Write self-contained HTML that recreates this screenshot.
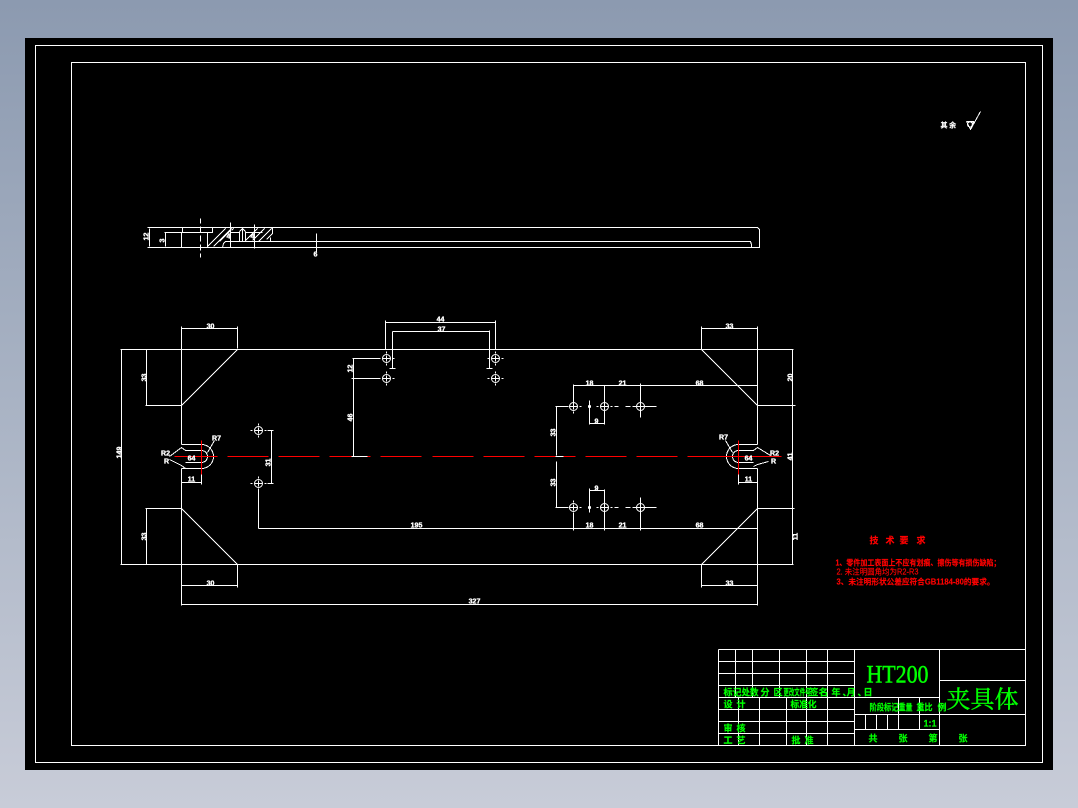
<!DOCTYPE html>
<html><head><meta charset="utf-8"><style>
html,body{margin:0;padding:0;width:1078px;height:808px;overflow:hidden;background:linear-gradient(180deg,#8c9ab0 0%,#a9b3c4 50%,#c8ccd8 100%)}
svg{position:absolute;left:0;top:0}
.w{fill:none;stroke:#fff;stroke-width:1}
.r{fill:none;stroke:#f00;stroke-width:1}
.t{font:bold 7px "Liberation Sans",sans-serif;fill:#fff;stroke:#fff;stroke-width:.35;text-anchor:middle}
.g{font:bold 9px "Liberation Sans","Noto Sans CJK SC",sans-serif;fill:#0f0;stroke:#0f0;stroke-width:.2}
.p{font:bold 8px "Liberation Sans","Noto Sans CJK SC",sans-serif;fill:#f00;stroke:#f00;stroke-width:.15}
</style></head><body>
<svg width="1078" height="808" viewBox="0 0 1078 808" shape-rendering="crispEdges">
<rect x="25" y="38" width="1028" height="732" fill="#000"/>
<g transform="translate(.5 .5)">
<defs><g id="h"><circle r="4" class="w" shape-rendering="auto"/><path class="w" d="M-8 0H-6M-4 0H4M6 0H8M0-7V-5M0-3V3M0 5V7"/></g></defs>
<path class="w" d="M35 45H1042V762H35ZM71 62H1025V745H71Z"/>

<!-- top view -->
<path class="w" d="M147 227H757L759 229V247H147M164 232H212V227M182 232V227M165 232V246M149 228V246M181 232V247M207 232V247M230 241H750L751 244V247M272 227V233M270 237V241M316 233V252M230 222V247M254 224V248M230 232H239M245 232H262M239 231V241M242 229V241M245 231V241M239 231L242 228L245 231M222 247L223 243L225 241H230"/>
<path class="w" d="M200 218V223M200 226V232M200 235V241M200 244V250M200 253V257"/>
<path class="w" d="M207 246L225 228M213 246L231 228M219 241L230 230M231 230L233 228M245 240L257 228M252 240L264 228M258 241L271 228M266 239L272 233"/>
<text class="t" transform="translate(148 236) rotate(-90)">12</text>
<text class="t" transform="translate(164 240) rotate(-90)">3</text>
<text class="t" x="315" y="256">6</text>
<text class="t" x="228" y="238">4</text>
<text class="t" x="252" y="238">4</text>

<!-- outline -->
<path class="w" d="M120 349H793M120 564H793M181 326V444M181 468V605M757 326V444M757 468V605M181 405L237 349M701 349L757 405M181 508L237 564M757 508L701 564"/>
<!-- left slot -->
<path class="w" d="M181 444H201A12 12 0 0 1 201 468H181M185 450H201A6 6 0 0 1 201 462H185M169 456L181 447L185 450M169 459L181 465L185 468M207 452L214 440" />
<!-- right slot -->
<path class="w" d="M757 444H738A12 12 0 0 0 738 468H757M753 450H738A6 6 0 0 0 738 462H753M770 455L757 447L753 450M768 461L757 464L753 466M732 452L725 440"/>
<!-- dims -->
<path class="w" d="M181 328H237M237 326V348M701 328H757M701 326V349M181 585H237M237 564V587M701 585H757M701 564V587M181 604H757M181 482H201M201 474V484M738 482H757M738 474V484"/>
<path class="w" d="M121 349V564M146 349V405M145 405H181M145 508H181M146 508V564M792 349V564M757 405H795M757 508H794"/>
<path class="w" d="M385 320V349M385 322H495M495 320V349M392 331V368M392 331H489M489 330V368M389 368H395M486 368H492"/>
<path class="w" d="M352 358H380M351 378H380M353 358V456M351 456H367"/>
<path class="w" d="M267 430H273M271 430V483M267 483H273M258 490V528M258 528H757"/>
<path class="w" d="M573 385H757M573 384V403M604 385V424M640 383V417M589 400V424M589 423H604"/>
<path class="w" d="M555 406H568M555 507H568M556 406V455M556 461V507M555 456H563"/>
<path class="w" d="M573 512V530M604 489V530M640 497V530M589 488V512M589 490H604"/>

<!-- holes -->
<use href="#h" x="386" y="358"/><use href="#h" x="386" y="378"/>
<use href="#h" x="495" y="358"/><use href="#h" x="495" y="378"/>
<use href="#h" x="258" y="430"/><use href="#h" x="258" y="483"/>
<use href="#h" x="573" y="406"/><use href="#h" x="604" y="406"/><use href="#h" x="640" y="406"/>
<use href="#h" x="573" y="507"/><use href="#h" x="604" y="507"/><use href="#h" x="640" y="507"/>
<path class="w" d="M632 406H636M644 406H656M625 406H630M625 507H630M632 507H636M644 507H656M614 406H618M614 507H618"/>
<circle cx="589" cy="406" r="1.5" fill="#fff"/><circle cx="589" cy="507" r="1.5" fill="#fff"/>

<!-- red centre lines -->
<path class="r" d="M174 456H217M227 456H268M278 456H319M329 456H351M367 456H370M380 456H421M432 456H473M483 456H524M534 456H555M563 456H575M585 456H626M636 456H677M687 456H781M201 440V474M738 440V474"/>
<path class="w" d="M351 456H367M555 456H563"/>

<!-- dim texts -->
<text class="t" x="210" y="328">30</text><text class="t" x="729" y="328">33</text>
<text class="t" x="210" y="585">30</text><text class="t" x="729" y="585">33</text>
<text class="t" x="474" y="603">327</text><text class="t" x="416" y="527">195</text>
<text class="t" x="440" y="321">44</text><text class="t" x="441" y="331">37</text>
<text class="t" x="589" y="385">18</text><text class="t" x="622" y="385">21</text><text class="t" x="699" y="385">68</text>
<text class="t" x="589" y="527">18</text><text class="t" x="622" y="527">21</text><text class="t" x="699" y="527">68</text>
<text class="t" x="596" y="423">9</text><text class="t" x="596" y="490">9</text>
<text class="t" x="216" y="440">R7</text><text class="t" x="723" y="439">R7</text>
<text class="t" x="165" y="455">R2</text><text class="t" x="166" y="463">R</text>
<text class="t" x="774" y="455">R2</text><text class="t" x="773" y="463">R</text>
<text class="t" x="191" y="460">64</text><text class="t" x="748" y="460">64</text>
<text class="t" x="191" y="481">11</text><text class="t" x="748" y="481">11</text>
<text class="t" transform="translate(121 452) rotate(-90)">149</text>
<text class="t" transform="translate(146 377) rotate(-90)">33</text>
<text class="t" transform="translate(146 536) rotate(-90)">33</text>
<text class="t" transform="translate(352 368) rotate(-90)">12</text>
<text class="t" transform="translate(352 417) rotate(-90)">46</text>
<text class="t" transform="translate(270 462) rotate(-90)">31</text>
<text class="t" transform="translate(555 432) rotate(-90)">33</text>
<text class="t" transform="translate(555 482) rotate(-90)">33</text>
<text class="t" transform="translate(792 377) rotate(-90)">20</text>
<text class="t" transform="translate(792 456) rotate(-90)">41</text>
<text class="t" transform="translate(797 536) rotate(-90)">11</text>

<!-- roughness -->
<text x="940" y="127" style="font:bold 7px 'Noto Sans CJK SC',sans-serif;fill:#fff;stroke:#fff;stroke-width:.2">其 余</text>
<path class="w" d="M966 121H973L970 129L966 121M970 129L980 111"/>
<circle cx="969.5" cy="124" r="2.5" class="w"/>

<!-- red notes -->
<text class="p" x="869 885 899 916" y="543" style="font-size:9px">技术要求</text>
<text class="p" x="835" y="565" textLength="165" lengthAdjust="spacingAndGlyphs">1、零件加工表面上不应有划痕、擦伤等有损伤缺陷；</text>
<text class="p" x="836" y="574" style="font-weight:normal" textLength="82" lengthAdjust="spacingAndGlyphs">2. 未注明圆角均为R2-R3</text>
<text class="p" x="836" y="584" textLength="158" lengthAdjust="spacingAndGlyphs">3、未注明形状公差应符合GB1184-80的要求。</text>

<!-- title block -->
<path class="w" d="M718 649H1025M718 649V745M718 661H854M718 673H854M718 685H854M718 697H939M718 709H854M718 721H854M718 733H854M854 649V745M939 649V745M735 649V697M752 649V697M779 649V697M806 649V697M827 649V697M738 697V745M759 697V745M786 697V745M806 697V745M827 697V745M939 680H1025M854 714H1025M854 729H939M865 714V729M876 714V729M887 714V729M898 697V729M919 697V729"/>
<text x="866" y="682" style="font:25px 'Liberation Serif',serif;fill:#0f0;stroke:#0f0;stroke-width:.5" textLength="62" lengthAdjust="spacingAndGlyphs">HT200</text>
<text x="946" y="707" style="font:24px 'Noto Serif CJK SC','Noto Sans CJK SC',serif;fill:#0f0;stroke:#0f0;stroke-width:.4">夹具体</text>
<text class="g" x="723" y="695" textLength="18" lengthAdjust="spacingAndGlyphs">标记</text>
<text class="g" x="741" y="695" textLength="17" lengthAdjust="spacingAndGlyphs">处数</text>
<text class="g" x="760" y="695">分</text>
<text class="g" x="773" y="695">区</text>
<text class="g" x="783" y="695" textLength="27" lengthAdjust="spacingAndGlyphs">更改文件号</text>
<text class="g" x="808" y="695" textLength="20" lengthAdjust="spacingAndGlyphs">签名</text>
<text class="g" x="831 842 846 857 863" y="695">年、月、日</text>
<text class="g" x="723 736" y="707">设计</text>
<text class="g" x="790" y="707" textLength="26" lengthAdjust="spacingAndGlyphs">标准化</text>
<text class="g" x="869" y="710" textLength="29" lengthAdjust="spacingAndGlyphs">阶段标记</text>
<text class="g" x="898" y="710" textLength="14" lengthAdjust="spacingAndGlyphs">重量</text>
<text class="g" x="916" y="710" textLength="16" lengthAdjust="spacingAndGlyphs">重比</text>
<text class="g" x="937" y="710">例</text>
<text class="g" x="923" y="726">1:1</text>
<text class="g" x="723 736" y="731">审核</text>
<text class="g" x="723 736" y="743">工艺</text>
<text class="g" x="791 804" y="743">批准</text>
<text class="g" x="868" y="741">共</text><text class="g" x="898" y="741">张</text>
<text class="g" x="928" y="741">第</text><text class="g" x="958" y="741">张</text>
</g>
</svg>
</body></html>
